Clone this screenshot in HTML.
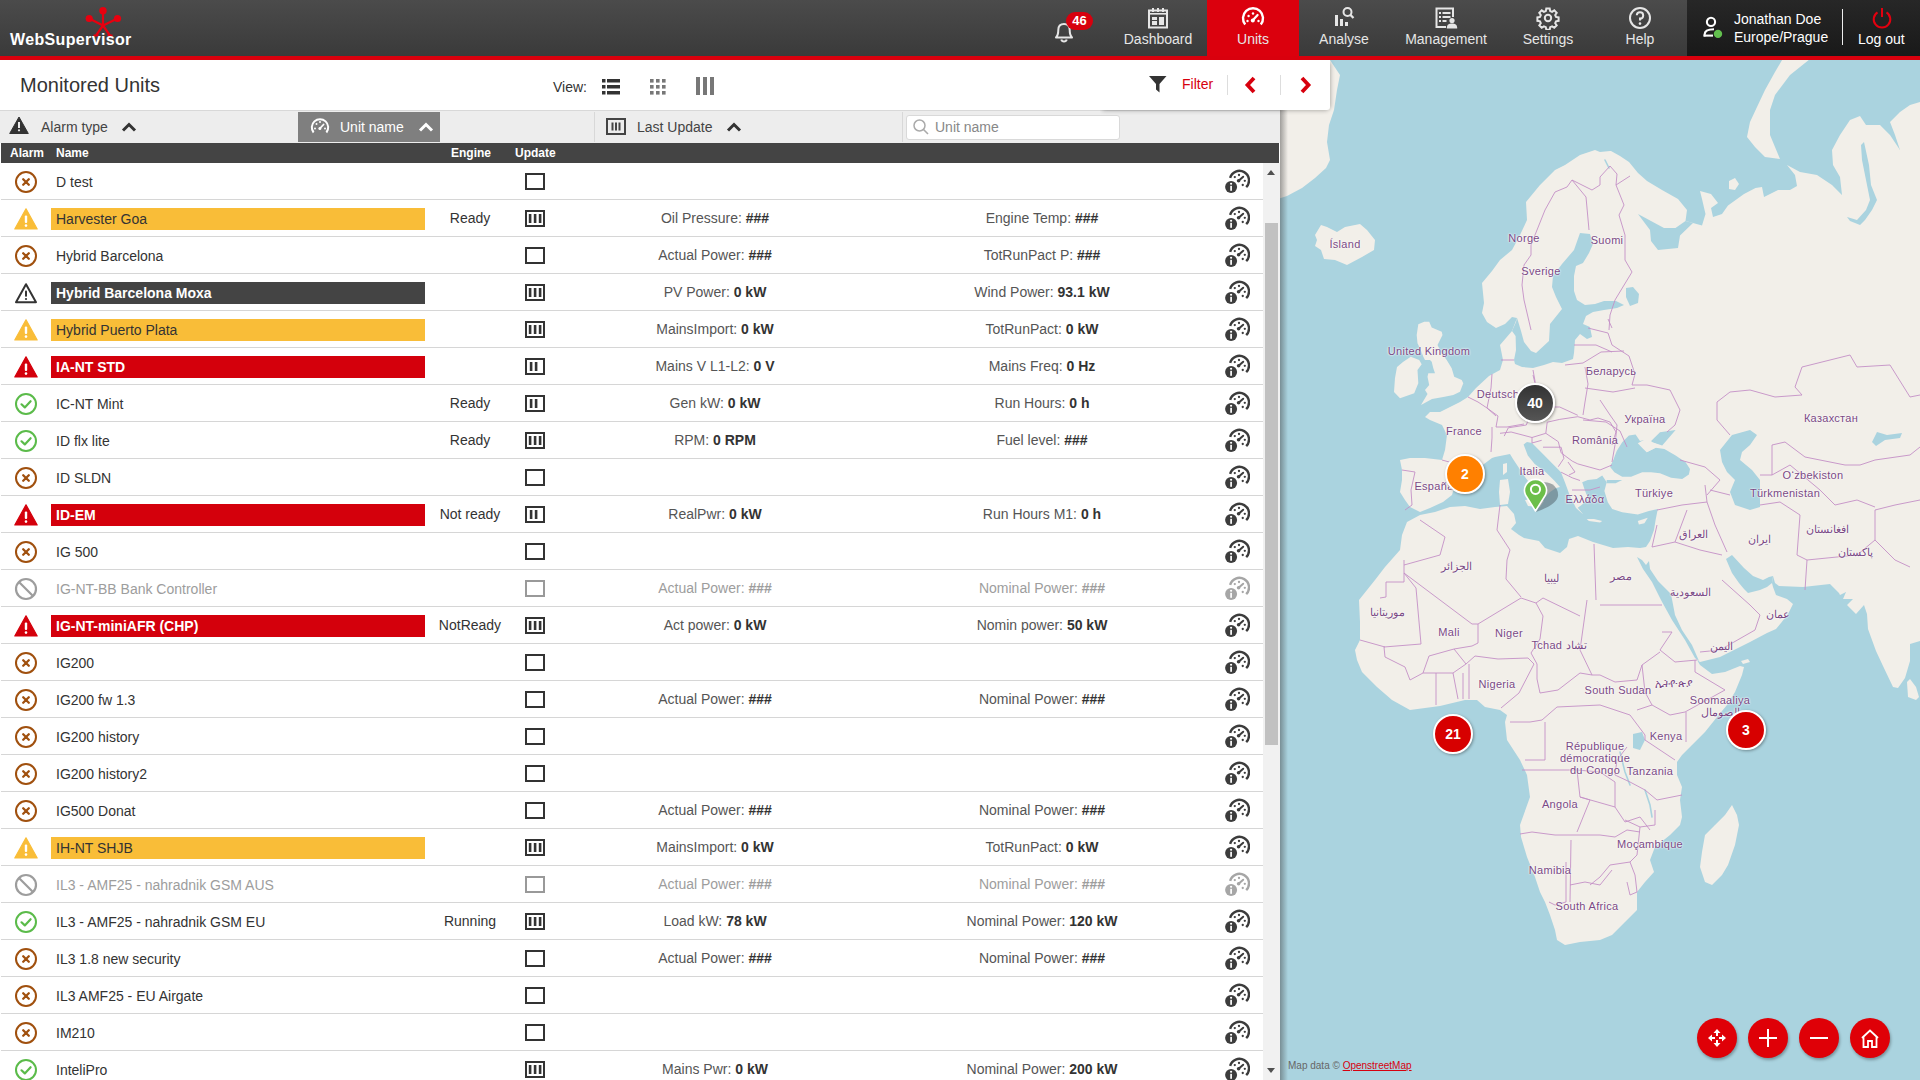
<!DOCTYPE html>
<html><head><meta charset="utf-8"><title>WebSupervisor - Units</title>
<style>*{margin:0;padding:0;box-sizing:border-box}
html,body{width:1920px;height:1080px;overflow:hidden;background:#fff;font-family:"Liberation Sans",sans-serif;color:#333}
#hdr{position:absolute;left:0;top:0;width:1920px;height:56px;background:linear-gradient(#4b4b4b,#3a3a3a)}
#redline{position:absolute;left:0;top:56px;width:1920px;height:4px;background:#d9000d}
#left{position:absolute;left:0;top:60px;width:1280px;height:1020px;background:#fff;overflow:hidden}
#left .row{position:absolute;left:1px;width:1262px;height:37px;border-bottom:1px solid #d6d6d6}
#left .row > div{position:absolute}
.al{left:13px;top:7px;width:24px;height:24px}
.nm{left:55px;top:11px;font-size:14px;white-space:nowrap;color:#333}
.nm.bar{left:50px;top:8px;width:374px;height:22px;padding:3px 0 0 5px}
.bar-y{background:#f9bd38;color:#333}
.bar-r{background:#d4000c;color:#fff;font-weight:bold}
.bar-d{background:#444;color:#fff;font-weight:bold}
.eng{left:419px;width:100px;text-align:center;top:10px;font-size:14px}
.up{left:524px;top:10px;width:20px;height:17px}
.v1,.v2{top:10px;font-size:14px;text-align:center;white-space:nowrap}
.v1{left:564px;width:300px}
.v2{left:891px;width:300px}
.lb{color:#555}
.v1 b,.v2 b{font-weight:bold;color:#333}
.inf{left:1223px;top:6px;width:26px;height:24px}
.row.gray .nm,.row.gray .lb,.row.gray b{color:#9d9d9d}
#thead{position:absolute;left:1px;top:83px;width:1278px;height:20px;background:#444}
#thead span{position:absolute;top:3px;font-size:12px;font-weight:bold;color:#fff}
#sbar{position:absolute;left:1263px;top:103px;width:17px;height:917px;background:#f1f1f1}
#sthumb{position:absolute;left:2px;top:60px;width:13px;height:522px;background:#c1c1c1}
#map{position:absolute;left:1280px;top:60px;width:640px;height:1020px;overflow:hidden;background:#aad3df}
.nav{position:absolute;top:0;width:120px;height:56px;text-align:center}
.nav .ni{position:absolute;left:48px;top:6px}
.navl{position:absolute;left:0;top:31px;width:120px;text-align:center;font-size:14px;color:#e6e6e6}
#sortbar{position:absolute;left:0;top:50px;width:1280px;height:33px;background:#ededed;border-top:1px solid #d8d8d8}
#sortbar .st{position:absolute;top:8px;font-size:14px;color:#444}
#tbox{position:absolute;left:1100px;top:60px;width:230px;height:50px;background:#fff;border-radius:0 0 3px 0;box-shadow:0 3px 4px -2px rgba(0,0,0,0.22),3px 0 4px -2px rgba(0,0,0,0.22);clip-path:inset(0 -10px -10px 0)}
.ml{position:absolute;width:120px;text-align:center;color:#7a4985;white-space:nowrap;letter-spacing:0.3px;text-shadow:0 0 2px #fff,0 0 2px #fff}
.sarr{position:absolute;left:4px;width:0;height:0;border-left:4px solid transparent;border-right:4px solid transparent}
.sarr.up{top:7px;border-bottom:5px solid #505050}
.sarr.dn{top:905px;border-top:5px solid #505050}
</style></head>
<body>
<div id="hdr"><svg style="position:absolute;left:82px;top:5px" width="44" height="32" viewBox="0 0 44 32">
<g stroke="#e8000f" stroke-width="2.2" fill="none" stroke-linecap="butt">
<path d="M21 6V20.5M7.2 13.5L21 20.5L35.5 13.5M21 20.5L14 30.5M21 20.5L28 30.5M11.5 30.5H16.5M25.5 30.5H30.5" stroke-linejoin="round"/>
</g>
<g fill="#e8000f"><circle cx="21" cy="5.7" r="3.7"/><circle cx="7.2" cy="13.5" r="3.6"/><circle cx="35.5" cy="13.5" r="3.6"/></g>
</svg>
<div style="position:absolute;left:10px;top:31px;font-size:16px;font-weight:bold;color:#fff;letter-spacing:0.35px">WebSupervisor</div><svg style="position:absolute;left:1053px;top:19px" width="22" height="24" viewBox="0 0 22 24"><path d="M3 18.5C5 16.5 5.3 14 5.3 11C5.3 7.3 7.5 5 11 5C14.5 5 16.7 7.3 16.7 11C16.7 14 17 16.5 19 18.5Z" fill="none" stroke="#e6e6e6" stroke-width="2" stroke-linejoin="round"/>
<path d="M8.3 20.5A2.8 2.8 0 0 0 13.7 20.5" fill="none" stroke="#e6e6e6" stroke-width="2"/></svg>
<div style="position:absolute;left:1066px;top:12px;width:27px;height:18px;border-radius:9px;background:#d7000e;color:#fff;font-size:13px;font-weight:bold;text-align:center;line-height:18px">46</div>
<div style="position:absolute;left:1207px;top:0;width:92px;height:56px;background:#db000d"></div>
<div class="nav" style="left:1098px"><svg class="ni" width="24" height="24" viewBox="0 0 24 24"><g fill="none" stroke="#e6e6e6" stroke-width="2"><rect x="3" y="4.5" width="18" height="17"/></g>
<g fill="#e6e6e6"><rect x="6" y="2" width="2" height="4"/><rect x="11" y="2" width="2" height="4"/><rect x="16" y="2" width="2" height="4"/>
<rect x="3" y="7" width="18" height="1.6"/><rect x="6" y="11" width="5" height="3"/><rect x="6" y="15" width="5" height="4"/><rect x="13" y="11" width="5" height="8"/></g></svg><div class="navl">Dashboard</div></div><div class="nav" style="left:1193px"><svg class="ni" width="24" height="24" viewBox="0 0 24 24"><path d="M4.2 18.5A10 10 0 1 1 19.8 18.5" fill="none" stroke="#fff" stroke-width="2.4"/>
<g fill="#fff"><circle cx="6.5" cy="15" r="1.2"/><circle cx="7.6" cy="10" r="1.2"/><circle cx="12" cy="7.5" r="1.2"/><circle cx="17.5" cy="15" r="1.2"/></g>
<path d="M11.6 14.6L16.6 9" stroke="#fff" stroke-width="2.2" stroke-linecap="round"/><circle cx="11.8" cy="14.5" r="2" fill="#fff"/></svg><div class="navl">Units</div></div><div class="nav" style="left:1284px"><svg class="ni" width="24" height="24" viewBox="0 0 24 24"><g fill="#e6e6e6"><rect x="3" y="9" width="3" height="11"/><rect x="8" y="13" width="3" height="7"/><rect x="13" y="16" width="3" height="4"/></g>
<circle cx="15.5" cy="6" r="4" fill="none" stroke="#e6e6e6" stroke-width="2"/><path d="M18.4 8.9L21.5 12" stroke="#e6e6e6" stroke-width="2.2"/></svg><div class="navl">Analyse</div></div><div class="nav" style="left:1386px"><svg class="ni" width="24" height="24" viewBox="0 0 24 24"><path d="M12 21H2.5V2.5H19V11" fill="none" stroke="#e6e6e6" stroke-width="2"/>
<g fill="#e6e6e6"><rect x="5" y="6" width="2" height="2"/><rect x="8.5" y="6" width="8" height="2"/><rect x="5" y="10" width="2" height="2"/><rect x="8.5" y="10" width="8" height="2"/><rect x="5" y="14" width="2" height="2"/><rect x="8.5" y="14" width="4" height="2"/>
<circle cx="18" cy="14.5" r="2.6"/><path d="M12.8 22.5C12.8 18.5 15 17.6 18 17.6C21 17.6 23.2 18.5 23.2 22.5Z"/></g></svg><div class="navl">Management</div></div><div class="nav" style="left:1488px"><svg class="ni" width="24" height="24" viewBox="0 0 24 24"><g fill="none" stroke="#e6e6e6" stroke-width="2">
<path d="M10.3 2.5h3.4l.5 2.6 1.9.8 2.2-1.5 2.4 2.4-1.5 2.2.8 1.9 2.6.5v3.4l-2.6.5-.8 1.9 1.5 2.2-2.4 2.4-2.2-1.5-1.9.8-.5 2.6h-3.4l-.5-2.6-1.9-.8-2.2 1.5-2.4-2.4 1.5-2.2-.8-1.9-2.6-.5v-3.4l2.6-.5.8-1.9-1.5-2.2 2.4-2.4 2.2 1.5 1.9-.8z"/>
<circle cx="12" cy="12" r="3.2"/></g></svg><div class="navl">Settings</div></div><div class="nav" style="left:1580px"><svg class="ni" width="24" height="24" viewBox="0 0 24 24"><circle cx="12" cy="12" r="10" fill="none" stroke="#e6e6e6" stroke-width="2"/>
<path d="M8.8 9.3A3.2 3.2 0 1 1 12 12.6V14.6" fill="none" stroke="#e6e6e6" stroke-width="2"/><circle cx="12" cy="17.6" r="1.3" fill="#e6e6e6"/></svg><div class="navl">Help</div></div>
<div style="position:absolute;left:1687px;top:0;width:233px;height:56px;background:linear-gradient(#272727,#191919)"></div>
<svg style="position:absolute;left:1700px;top:16px" width="24" height="24" viewBox="0 0 24 24"><circle cx="11" cy="5.9" r="4.1" fill="none" stroke="#fff" stroke-width="2.1"/><path d="M4.6 20.5V18.6C4.6 15 7.5 13.3 14 13.3" fill="none" stroke="#fff" stroke-width="2.1"/><path d="M3.6 19.6H13" stroke="#fff" stroke-width="2.1"/><circle cx="18" cy="17.9" r="4.2" fill="#62c04e"/></svg>
<div style="position:absolute;left:1734px;top:10px;font-size:14px;color:#fff;line-height:18px">Jonathan Doe<br>Europe/Prague</div>
<div style="position:absolute;left:1842px;top:9px;width:1px;height:36px;background:#eee"></div>
<svg style="position:absolute;left:1870px;top:6px" width="24" height="24" viewBox="0 0 24 24"><path d="M7.5 6.3A8.3 8.3 0 1 0 16.5 6.3" fill="none" stroke="#e3000f" stroke-width="2"/><path d="M12 2V11" stroke="#e3000f" stroke-width="2"/></svg>
<div style="position:absolute;left:1858px;top:31px;font-size:14px;color:#fff">Log out</div>
</div><div id="redline"></div>
<div id="left">

<div style="position:absolute;left:20px;top:14px;font-size:20px;color:#333">Monitored Units</div>
<div style="position:absolute;left:553px;top:19px;font-size:14px;color:#333">View:</div>
<div style="position:absolute;left:601px;top:18px"><svg width="20" height="18" viewBox="0 0 20 18"><g fill="#333"><rect x="1" y="1" width="3.5" height="3.5"/><rect x="6" y="1" width="13" height="3.5"/><rect x="1" y="7" width="3.5" height="3.5"/><rect x="6" y="7" width="13" height="3.5"/><rect x="1" y="13" width="3.5" height="3.5"/><rect x="6" y="13" width="13" height="3.5"/></g></svg></div>
<div style="position:absolute;left:649px;top:18px"><svg width="18" height="18" viewBox="0 0 18 18"><g fill="#777"><rect x="1" y="1" width="3.6" height="3.6"/><rect x="1" y="7" width="3.6" height="3.6"/><rect x="1" y="13" width="3.6" height="3.6"/><rect x="7" y="1" width="3.6" height="3.6"/><rect x="7" y="7" width="3.6" height="3.6"/><rect x="7" y="13" width="3.6" height="3.6"/><rect x="13" y="1" width="3.6" height="3.6"/><rect x="13" y="7" width="3.6" height="3.6"/><rect x="13" y="13" width="3.6" height="3.6"/></g></svg></div>
<div style="position:absolute;left:695px;top:16px"><svg width="20" height="20" viewBox="0 0 20 20"><g fill="#777"><rect x="1" y="1" width="4" height="18"/><rect x="8" y="1" width="4" height="18"/><rect x="15" y="1" width="4" height="18"/></g></svg></div>
<div id="sortbar">
 <div style="position:absolute;left:9px;top:5px"><svg width="20" height="18" viewBox="0 0 20 18"><path d="M10 1L19.3 17.5H0.7Z" fill="#333" stroke="#333" stroke-width="1" stroke-linejoin="round"/><rect x="9" y="6" width="2" height="6" fill="#eee"/><circle cx="10" cy="14.3" r="1.1" fill="#eee"/></svg></div>
 <div class="st" style="left:41px">Alarm type</div>
 <div style="position:absolute;left:121px;top:7px"><svg width="16" height="10" viewBox="0 0 16 10"><path d="M2 8.5L8 2.5L14 8.5" fill="none" stroke="#333" stroke-width="3" stroke-linejoin="miter"/></svg></div>
 <div style="position:absolute;left:298px;top:1px;width:142px;height:30px;background:#7f7f7f"></div>
 <div style="position:absolute;left:310px;top:6px"><svg width="20" height="18" viewBox="0 0 20 18"><path d="M3.6 15.5A8.2 8.2 0 1 1 16.4 15.5" fill="none" stroke="#fff" stroke-width="2"/><g fill="#fff"><circle cx="5" cy="11.5" r="1"/><circle cx="6.5" cy="7" r="1"/><circle cx="10" cy="5" r="1"/><circle cx="15" cy="11.5" r="1"/></g><path d="M9.8 11.5L13.6 7.5" stroke="#fff" stroke-width="1.8" stroke-linecap="round"/><circle cx="9.9" cy="11.4" r="1.5" fill="#fff"/></svg></div>
 <div class="st" style="left:340px;color:#fff">Unit name</div>
 <div style="position:absolute;left:418px;top:7px"><svg width="16" height="10" viewBox="0 0 16 10"><path d="M2 8.5L8 2.5L14 8.5" fill="none" stroke="#fff" stroke-width="3" stroke-linejoin="miter"/></svg></div>
 <div style="position:absolute;left:594px;top:1px;width:1px;height:30px;background:#d8d8d8"></div>
 <div style="position:absolute;left:606px;top:7px"><svg width="20" height="17" viewBox="0 0 20 17"><rect x="1" y="1" width="18" height="15" fill="none" stroke="#444" stroke-width="2"/><rect x="5.5" y="4.5" width="2" height="8" fill="#444"/><rect x="9" y="4.5" width="2" height="8" fill="#444"/><rect x="12.5" y="4.5" width="2" height="8" fill="#444"/></svg></div>
 <div class="st" style="left:637px">Last Update</div>
 <div style="position:absolute;left:726px;top:7px"><svg width="16" height="10" viewBox="0 0 16 10"><path d="M2 8.5L8 2.5L14 8.5" fill="none" stroke="#333" stroke-width="3" stroke-linejoin="miter"/></svg></div>
 <div style="position:absolute;left:902px;top:1px;width:1px;height:30px;background:#d8d8d8"></div>
 <div style="position:absolute;left:906px;top:4px;width:214px;height:25px;background:#fff;border:1px solid #d9d9d9;border-radius:3px"></div>
 <div style="position:absolute;left:912px;top:7px"><svg width="18" height="18" viewBox="0 0 18 18"><circle cx="7.5" cy="7.5" r="5.5" fill="none" stroke="#aaa" stroke-width="1.5"/><path d="M11.5 11.5L16 16" stroke="#aaa" stroke-width="1.6"/></svg></div>
 <div style="position:absolute;left:935px;top:8px;font-size:14px;color:#888">Unit name</div>
</div>

<div id="thead"><span style="left:9px">Alarm</span><span style="left:55px">Name</span><span style="left:450px">Engine</span><span style="left:514px">Update</span></div>
<div class="row" style="top:103px"><div class="al"><svg width="24" height="24" viewBox="0 0 24 24"><circle cx="12" cy="12" r="10" fill="none" stroke="#a0500e" stroke-width="2"/><path d="M9.2 9.2L14.8 14.8M14.8 9.2L9.2 14.8" stroke="#a0500e" stroke-width="2.3" stroke-linecap="round"/></svg></div><div class="nm">D test</div><div class="eng"></div><div class="up"><svg width="20" height="17" viewBox="0 0 20 17"><rect x="1" y="1" width="18" height="15" fill="none" stroke="#333" stroke-width="2"/></svg></div><div class="v1"></div><div class="v2"></div><div class="inf"><svg width="26" height="26" viewBox="0 0 26 26"><path d="M6.13 8.9A9.6 9.6 0 1 1 22.19 18.19" fill="none" stroke="#3c3c3c" stroke-width="2.4"/><circle cx="10.8" cy="8.1" r="1.15" fill="#3c3c3c"/><circle cx="15" cy="6" r="1.15" fill="#3c3c3c"/><circle cx="20.8" cy="11.8" r="1.15" fill="#3c3c3c"/><circle cx="18.75" cy="16" r="1.15" fill="#3c3c3c"/><path d="M14.6 11.8L19.2 7.7" stroke="#3c3c3c" stroke-width="2" stroke-linecap="round"/><circle cx="14.6" cy="11.8" r="1.8" fill="#3c3c3c"/><circle cx="7.1" cy="18.1" r="6.6" fill="#fff"/><circle cx="7.1" cy="18.1" r="6" fill="#3c3c3c"/><rect x="6.25" y="16.8" width="1.7" height="5" fill="#fff"/><circle cx="7.1" cy="14.75" r="1.1" fill="#fff"/></svg></div></div><div class="row" style="top:140px"><div class="al"><svg width="24" height="24" viewBox="0 0 24 24"><path d="M12 1.8L23.2 22H0.8Z" fill="#f9bd38" stroke="#f9bd38" stroke-width="1.2" stroke-linejoin="round"/><rect x="10.8" y="8.6" width="2.4" height="7.4" rx="1" fill="#fff"/><circle cx="12" cy="18.6" r="1.3" fill="#fff"/></svg></div><div class="nm bar bar-y">Harvester Goa</div><div class="eng">Ready</div><div class="up"><svg width="20" height="17" viewBox="0 0 20 17"><rect x="1" y="1" width="18" height="15" fill="none" stroke="#333" stroke-width="2"/><rect x="3.8" y="4" width="2.6" height="9" fill="#333"/><rect x="8.8" y="4" width="2.6" height="9" fill="#333"/><rect x="13.8" y="4" width="2.6" height="9" fill="#333"/></svg></div><div class="v1"><span class="lb">Oil Pressure:</span> <b>###</b></div><div class="v2"><span class="lb">Engine Temp:</span> <b>###</b></div><div class="inf"><svg width="26" height="26" viewBox="0 0 26 26"><path d="M6.13 8.9A9.6 9.6 0 1 1 22.19 18.19" fill="none" stroke="#3c3c3c" stroke-width="2.4"/><circle cx="10.8" cy="8.1" r="1.15" fill="#3c3c3c"/><circle cx="15" cy="6" r="1.15" fill="#3c3c3c"/><circle cx="20.8" cy="11.8" r="1.15" fill="#3c3c3c"/><circle cx="18.75" cy="16" r="1.15" fill="#3c3c3c"/><path d="M14.6 11.8L19.2 7.7" stroke="#3c3c3c" stroke-width="2" stroke-linecap="round"/><circle cx="14.6" cy="11.8" r="1.8" fill="#3c3c3c"/><circle cx="7.1" cy="18.1" r="6.6" fill="#fff"/><circle cx="7.1" cy="18.1" r="6" fill="#3c3c3c"/><rect x="6.25" y="16.8" width="1.7" height="5" fill="#fff"/><circle cx="7.1" cy="14.75" r="1.1" fill="#fff"/></svg></div></div><div class="row" style="top:177px"><div class="al"><svg width="24" height="24" viewBox="0 0 24 24"><circle cx="12" cy="12" r="10" fill="none" stroke="#a0500e" stroke-width="2"/><path d="M9.2 9.2L14.8 14.8M14.8 9.2L9.2 14.8" stroke="#a0500e" stroke-width="2.3" stroke-linecap="round"/></svg></div><div class="nm">Hybrid Barcelona</div><div class="eng"></div><div class="up"><svg width="20" height="17" viewBox="0 0 20 17"><rect x="1" y="1" width="18" height="15" fill="none" stroke="#333" stroke-width="2"/></svg></div><div class="v1"><span class="lb">Actual Power:</span> <b>###</b></div><div class="v2"><span class="lb">TotRunPact P:</span> <b>###</b></div><div class="inf"><svg width="26" height="26" viewBox="0 0 26 26"><path d="M6.13 8.9A9.6 9.6 0 1 1 22.19 18.19" fill="none" stroke="#3c3c3c" stroke-width="2.4"/><circle cx="10.8" cy="8.1" r="1.15" fill="#3c3c3c"/><circle cx="15" cy="6" r="1.15" fill="#3c3c3c"/><circle cx="20.8" cy="11.8" r="1.15" fill="#3c3c3c"/><circle cx="18.75" cy="16" r="1.15" fill="#3c3c3c"/><path d="M14.6 11.8L19.2 7.7" stroke="#3c3c3c" stroke-width="2" stroke-linecap="round"/><circle cx="14.6" cy="11.8" r="1.8" fill="#3c3c3c"/><circle cx="7.1" cy="18.1" r="6.6" fill="#fff"/><circle cx="7.1" cy="18.1" r="6" fill="#3c3c3c"/><rect x="6.25" y="16.8" width="1.7" height="5" fill="#fff"/><circle cx="7.1" cy="14.75" r="1.1" fill="#fff"/></svg></div></div><div class="row" style="top:214px"><div class="al"><svg width="24" height="24" viewBox="0 0 24 24"><path d="M12 3.2L22 21.2H2Z" fill="none" stroke="#333" stroke-width="2" stroke-linejoin="round"/><rect x="11" y="9.4" width="2" height="6.4" rx="0.8" fill="#333"/><circle cx="12" cy="18" r="1.1" fill="#333"/></svg></div><div class="nm bar bar-d">Hybrid Barcelona Moxa</div><div class="eng"></div><div class="up"><svg width="20" height="17" viewBox="0 0 20 17"><rect x="1" y="1" width="18" height="15" fill="none" stroke="#333" stroke-width="2"/><rect x="3.8" y="4" width="2.6" height="9" fill="#333"/><rect x="8.8" y="4" width="2.6" height="9" fill="#333"/><rect x="13.8" y="4" width="2.6" height="9" fill="#333"/></svg></div><div class="v1"><span class="lb">PV Power:</span> <b>0 kW</b></div><div class="v2"><span class="lb">Wind Power:</span> <b>93.1 kW</b></div><div class="inf"><svg width="26" height="26" viewBox="0 0 26 26"><path d="M6.13 8.9A9.6 9.6 0 1 1 22.19 18.19" fill="none" stroke="#3c3c3c" stroke-width="2.4"/><circle cx="10.8" cy="8.1" r="1.15" fill="#3c3c3c"/><circle cx="15" cy="6" r="1.15" fill="#3c3c3c"/><circle cx="20.8" cy="11.8" r="1.15" fill="#3c3c3c"/><circle cx="18.75" cy="16" r="1.15" fill="#3c3c3c"/><path d="M14.6 11.8L19.2 7.7" stroke="#3c3c3c" stroke-width="2" stroke-linecap="round"/><circle cx="14.6" cy="11.8" r="1.8" fill="#3c3c3c"/><circle cx="7.1" cy="18.1" r="6.6" fill="#fff"/><circle cx="7.1" cy="18.1" r="6" fill="#3c3c3c"/><rect x="6.25" y="16.8" width="1.7" height="5" fill="#fff"/><circle cx="7.1" cy="14.75" r="1.1" fill="#fff"/></svg></div></div><div class="row" style="top:251px"><div class="al"><svg width="24" height="24" viewBox="0 0 24 24"><path d="M12 1.8L23.2 22H0.8Z" fill="#f9bd38" stroke="#f9bd38" stroke-width="1.2" stroke-linejoin="round"/><rect x="10.8" y="8.6" width="2.4" height="7.4" rx="1" fill="#fff"/><circle cx="12" cy="18.6" r="1.3" fill="#fff"/></svg></div><div class="nm bar bar-y">Hybrid Puerto Plata</div><div class="eng"></div><div class="up"><svg width="20" height="17" viewBox="0 0 20 17"><rect x="1" y="1" width="18" height="15" fill="none" stroke="#333" stroke-width="2"/><rect x="3.8" y="4" width="2.6" height="9" fill="#333"/><rect x="8.8" y="4" width="2.6" height="9" fill="#333"/><rect x="13.8" y="4" width="2.6" height="9" fill="#333"/></svg></div><div class="v1"><span class="lb">MainsImport:</span> <b>0 kW</b></div><div class="v2"><span class="lb">TotRunPact:</span> <b>0 kW</b></div><div class="inf"><svg width="26" height="26" viewBox="0 0 26 26"><path d="M6.13 8.9A9.6 9.6 0 1 1 22.19 18.19" fill="none" stroke="#3c3c3c" stroke-width="2.4"/><circle cx="10.8" cy="8.1" r="1.15" fill="#3c3c3c"/><circle cx="15" cy="6" r="1.15" fill="#3c3c3c"/><circle cx="20.8" cy="11.8" r="1.15" fill="#3c3c3c"/><circle cx="18.75" cy="16" r="1.15" fill="#3c3c3c"/><path d="M14.6 11.8L19.2 7.7" stroke="#3c3c3c" stroke-width="2" stroke-linecap="round"/><circle cx="14.6" cy="11.8" r="1.8" fill="#3c3c3c"/><circle cx="7.1" cy="18.1" r="6.6" fill="#fff"/><circle cx="7.1" cy="18.1" r="6" fill="#3c3c3c"/><rect x="6.25" y="16.8" width="1.7" height="5" fill="#fff"/><circle cx="7.1" cy="14.75" r="1.1" fill="#fff"/></svg></div></div><div class="row" style="top:288px"><div class="al"><svg width="24" height="24" viewBox="0 0 24 24"><path d="M12 1.8L23.2 22H0.8Z" fill="#d4000c" stroke="#d4000c" stroke-width="1.2" stroke-linejoin="round"/><rect x="10.8" y="8.6" width="2.4" height="7.4" rx="1" fill="#fff"/><circle cx="12" cy="18.6" r="1.3" fill="#fff"/></svg></div><div class="nm bar bar-r">IA-NT STD</div><div class="eng"></div><div class="up"><svg width="20" height="17" viewBox="0 0 20 17"><rect x="1" y="1" width="18" height="15" fill="none" stroke="#333" stroke-width="2"/><rect x="4.8" y="4" width="2.6" height="9" fill="#333"/><rect x="9.8" y="4" width="2.6" height="9" fill="#333"/></svg></div><div class="v1"><span class="lb">Mains V L1-L2:</span> <b>0 V</b></div><div class="v2"><span class="lb">Mains Freq:</span> <b>0 Hz</b></div><div class="inf"><svg width="26" height="26" viewBox="0 0 26 26"><path d="M6.13 8.9A9.6 9.6 0 1 1 22.19 18.19" fill="none" stroke="#3c3c3c" stroke-width="2.4"/><circle cx="10.8" cy="8.1" r="1.15" fill="#3c3c3c"/><circle cx="15" cy="6" r="1.15" fill="#3c3c3c"/><circle cx="20.8" cy="11.8" r="1.15" fill="#3c3c3c"/><circle cx="18.75" cy="16" r="1.15" fill="#3c3c3c"/><path d="M14.6 11.8L19.2 7.7" stroke="#3c3c3c" stroke-width="2" stroke-linecap="round"/><circle cx="14.6" cy="11.8" r="1.8" fill="#3c3c3c"/><circle cx="7.1" cy="18.1" r="6.6" fill="#fff"/><circle cx="7.1" cy="18.1" r="6" fill="#3c3c3c"/><rect x="6.25" y="16.8" width="1.7" height="5" fill="#fff"/><circle cx="7.1" cy="14.75" r="1.1" fill="#fff"/></svg></div></div><div class="row" style="top:325px"><div class="al"><svg width="24" height="24" viewBox="0 0 24 24"><circle cx="12" cy="12" r="10" fill="none" stroke="#5bbb4a" stroke-width="2"/><path d="M7.5 12.3L10.8 15.4L16.6 9.2" fill="none" stroke="#5bbb4a" stroke-width="2.2" stroke-linecap="round" stroke-linejoin="round"/></svg></div><div class="nm">IC-NT Mint</div><div class="eng">Ready</div><div class="up"><svg width="20" height="17" viewBox="0 0 20 17"><rect x="1" y="1" width="18" height="15" fill="none" stroke="#333" stroke-width="2"/><rect x="4.8" y="4" width="2.6" height="9" fill="#333"/><rect x="9.8" y="4" width="2.6" height="9" fill="#333"/></svg></div><div class="v1"><span class="lb">Gen kW:</span> <b>0 kW</b></div><div class="v2"><span class="lb">Run Hours:</span> <b>0 h</b></div><div class="inf"><svg width="26" height="26" viewBox="0 0 26 26"><path d="M6.13 8.9A9.6 9.6 0 1 1 22.19 18.19" fill="none" stroke="#3c3c3c" stroke-width="2.4"/><circle cx="10.8" cy="8.1" r="1.15" fill="#3c3c3c"/><circle cx="15" cy="6" r="1.15" fill="#3c3c3c"/><circle cx="20.8" cy="11.8" r="1.15" fill="#3c3c3c"/><circle cx="18.75" cy="16" r="1.15" fill="#3c3c3c"/><path d="M14.6 11.8L19.2 7.7" stroke="#3c3c3c" stroke-width="2" stroke-linecap="round"/><circle cx="14.6" cy="11.8" r="1.8" fill="#3c3c3c"/><circle cx="7.1" cy="18.1" r="6.6" fill="#fff"/><circle cx="7.1" cy="18.1" r="6" fill="#3c3c3c"/><rect x="6.25" y="16.8" width="1.7" height="5" fill="#fff"/><circle cx="7.1" cy="14.75" r="1.1" fill="#fff"/></svg></div></div><div class="row" style="top:362px"><div class="al"><svg width="24" height="24" viewBox="0 0 24 24"><circle cx="12" cy="12" r="10" fill="none" stroke="#5bbb4a" stroke-width="2"/><path d="M7.5 12.3L10.8 15.4L16.6 9.2" fill="none" stroke="#5bbb4a" stroke-width="2.2" stroke-linecap="round" stroke-linejoin="round"/></svg></div><div class="nm">ID flx lite</div><div class="eng">Ready</div><div class="up"><svg width="20" height="17" viewBox="0 0 20 17"><rect x="1" y="1" width="18" height="15" fill="none" stroke="#333" stroke-width="2"/><rect x="3.8" y="4" width="2.6" height="9" fill="#333"/><rect x="8.8" y="4" width="2.6" height="9" fill="#333"/><rect x="13.8" y="4" width="2.6" height="9" fill="#333"/></svg></div><div class="v1"><span class="lb">RPM:</span> <b>0 RPM</b></div><div class="v2"><span class="lb">Fuel level:</span> <b>###</b></div><div class="inf"><svg width="26" height="26" viewBox="0 0 26 26"><path d="M6.13 8.9A9.6 9.6 0 1 1 22.19 18.19" fill="none" stroke="#3c3c3c" stroke-width="2.4"/><circle cx="10.8" cy="8.1" r="1.15" fill="#3c3c3c"/><circle cx="15" cy="6" r="1.15" fill="#3c3c3c"/><circle cx="20.8" cy="11.8" r="1.15" fill="#3c3c3c"/><circle cx="18.75" cy="16" r="1.15" fill="#3c3c3c"/><path d="M14.6 11.8L19.2 7.7" stroke="#3c3c3c" stroke-width="2" stroke-linecap="round"/><circle cx="14.6" cy="11.8" r="1.8" fill="#3c3c3c"/><circle cx="7.1" cy="18.1" r="6.6" fill="#fff"/><circle cx="7.1" cy="18.1" r="6" fill="#3c3c3c"/><rect x="6.25" y="16.8" width="1.7" height="5" fill="#fff"/><circle cx="7.1" cy="14.75" r="1.1" fill="#fff"/></svg></div></div><div class="row" style="top:399px"><div class="al"><svg width="24" height="24" viewBox="0 0 24 24"><circle cx="12" cy="12" r="10" fill="none" stroke="#a0500e" stroke-width="2"/><path d="M9.2 9.2L14.8 14.8M14.8 9.2L9.2 14.8" stroke="#a0500e" stroke-width="2.3" stroke-linecap="round"/></svg></div><div class="nm">ID SLDN</div><div class="eng"></div><div class="up"><svg width="20" height="17" viewBox="0 0 20 17"><rect x="1" y="1" width="18" height="15" fill="none" stroke="#333" stroke-width="2"/></svg></div><div class="v1"></div><div class="v2"></div><div class="inf"><svg width="26" height="26" viewBox="0 0 26 26"><path d="M6.13 8.9A9.6 9.6 0 1 1 22.19 18.19" fill="none" stroke="#3c3c3c" stroke-width="2.4"/><circle cx="10.8" cy="8.1" r="1.15" fill="#3c3c3c"/><circle cx="15" cy="6" r="1.15" fill="#3c3c3c"/><circle cx="20.8" cy="11.8" r="1.15" fill="#3c3c3c"/><circle cx="18.75" cy="16" r="1.15" fill="#3c3c3c"/><path d="M14.6 11.8L19.2 7.7" stroke="#3c3c3c" stroke-width="2" stroke-linecap="round"/><circle cx="14.6" cy="11.8" r="1.8" fill="#3c3c3c"/><circle cx="7.1" cy="18.1" r="6.6" fill="#fff"/><circle cx="7.1" cy="18.1" r="6" fill="#3c3c3c"/><rect x="6.25" y="16.8" width="1.7" height="5" fill="#fff"/><circle cx="7.1" cy="14.75" r="1.1" fill="#fff"/></svg></div></div><div class="row" style="top:436px"><div class="al"><svg width="24" height="24" viewBox="0 0 24 24"><path d="M12 1.8L23.2 22H0.8Z" fill="#d4000c" stroke="#d4000c" stroke-width="1.2" stroke-linejoin="round"/><rect x="10.8" y="8.6" width="2.4" height="7.4" rx="1" fill="#fff"/><circle cx="12" cy="18.6" r="1.3" fill="#fff"/></svg></div><div class="nm bar bar-r">ID-EM</div><div class="eng">Not ready</div><div class="up"><svg width="20" height="17" viewBox="0 0 20 17"><rect x="1" y="1" width="18" height="15" fill="none" stroke="#333" stroke-width="2"/><rect x="4.8" y="4" width="2.6" height="9" fill="#333"/><rect x="9.8" y="4" width="2.6" height="9" fill="#333"/></svg></div><div class="v1"><span class="lb">RealPwr:</span> <b>0 kW</b></div><div class="v2"><span class="lb">Run Hours M1:</span> <b>0 h</b></div><div class="inf"><svg width="26" height="26" viewBox="0 0 26 26"><path d="M6.13 8.9A9.6 9.6 0 1 1 22.19 18.19" fill="none" stroke="#3c3c3c" stroke-width="2.4"/><circle cx="10.8" cy="8.1" r="1.15" fill="#3c3c3c"/><circle cx="15" cy="6" r="1.15" fill="#3c3c3c"/><circle cx="20.8" cy="11.8" r="1.15" fill="#3c3c3c"/><circle cx="18.75" cy="16" r="1.15" fill="#3c3c3c"/><path d="M14.6 11.8L19.2 7.7" stroke="#3c3c3c" stroke-width="2" stroke-linecap="round"/><circle cx="14.6" cy="11.8" r="1.8" fill="#3c3c3c"/><circle cx="7.1" cy="18.1" r="6.6" fill="#fff"/><circle cx="7.1" cy="18.1" r="6" fill="#3c3c3c"/><rect x="6.25" y="16.8" width="1.7" height="5" fill="#fff"/><circle cx="7.1" cy="14.75" r="1.1" fill="#fff"/></svg></div></div><div class="row" style="top:473px"><div class="al"><svg width="24" height="24" viewBox="0 0 24 24"><circle cx="12" cy="12" r="10" fill="none" stroke="#a0500e" stroke-width="2"/><path d="M9.2 9.2L14.8 14.8M14.8 9.2L9.2 14.8" stroke="#a0500e" stroke-width="2.3" stroke-linecap="round"/></svg></div><div class="nm">IG 500</div><div class="eng"></div><div class="up"><svg width="20" height="17" viewBox="0 0 20 17"><rect x="1" y="1" width="18" height="15" fill="none" stroke="#333" stroke-width="2"/></svg></div><div class="v1"></div><div class="v2"></div><div class="inf"><svg width="26" height="26" viewBox="0 0 26 26"><path d="M6.13 8.9A9.6 9.6 0 1 1 22.19 18.19" fill="none" stroke="#3c3c3c" stroke-width="2.4"/><circle cx="10.8" cy="8.1" r="1.15" fill="#3c3c3c"/><circle cx="15" cy="6" r="1.15" fill="#3c3c3c"/><circle cx="20.8" cy="11.8" r="1.15" fill="#3c3c3c"/><circle cx="18.75" cy="16" r="1.15" fill="#3c3c3c"/><path d="M14.6 11.8L19.2 7.7" stroke="#3c3c3c" stroke-width="2" stroke-linecap="round"/><circle cx="14.6" cy="11.8" r="1.8" fill="#3c3c3c"/><circle cx="7.1" cy="18.1" r="6.6" fill="#fff"/><circle cx="7.1" cy="18.1" r="6" fill="#3c3c3c"/><rect x="6.25" y="16.8" width="1.7" height="5" fill="#fff"/><circle cx="7.1" cy="14.75" r="1.1" fill="#fff"/></svg></div></div><div class="row gray" style="top:510px"><div class="al"><svg width="24" height="24" viewBox="0 0 24 24"><circle cx="12" cy="12" r="10" fill="none" stroke="#9d9d9d" stroke-width="2.2"/><path d="M5 5L19 19" stroke="#9d9d9d" stroke-width="2.2"/></svg></div><div class="nm">IG-NT-BB Bank Controller</div><div class="eng"></div><div class="up"><svg width="20" height="17" viewBox="0 0 20 17"><rect x="1" y="1" width="18" height="15" fill="none" stroke="#999" stroke-width="2"/></svg></div><div class="v1"><span class="lb">Actual Power:</span> <b>###</b></div><div class="v2"><span class="lb">Nominal Power:</span> <b>###</b></div><div class="inf"><svg width="26" height="26" viewBox="0 0 26 26"><path d="M6.13 8.9A9.6 9.6 0 1 1 22.19 18.19" fill="none" stroke="#a6a6a6" stroke-width="2.4"/><circle cx="10.8" cy="8.1" r="1.15" fill="#a6a6a6"/><circle cx="15" cy="6" r="1.15" fill="#a6a6a6"/><circle cx="20.8" cy="11.8" r="1.15" fill="#a6a6a6"/><circle cx="18.75" cy="16" r="1.15" fill="#a6a6a6"/><path d="M14.6 11.8L19.2 7.7" stroke="#a6a6a6" stroke-width="2" stroke-linecap="round"/><circle cx="14.6" cy="11.8" r="1.8" fill="#a6a6a6"/><circle cx="7.1" cy="18.1" r="6.6" fill="#fff"/><circle cx="7.1" cy="18.1" r="6" fill="#a6a6a6"/><rect x="6.25" y="16.8" width="1.7" height="5" fill="#fff"/><circle cx="7.1" cy="14.75" r="1.1" fill="#fff"/></svg></div></div><div class="row" style="top:547px"><div class="al"><svg width="24" height="24" viewBox="0 0 24 24"><path d="M12 1.8L23.2 22H0.8Z" fill="#d4000c" stroke="#d4000c" stroke-width="1.2" stroke-linejoin="round"/><rect x="10.8" y="8.6" width="2.4" height="7.4" rx="1" fill="#fff"/><circle cx="12" cy="18.6" r="1.3" fill="#fff"/></svg></div><div class="nm bar bar-r">IG-NT-miniAFR (CHP)</div><div class="eng">NotReady</div><div class="up"><svg width="20" height="17" viewBox="0 0 20 17"><rect x="1" y="1" width="18" height="15" fill="none" stroke="#333" stroke-width="2"/><rect x="3.8" y="4" width="2.6" height="9" fill="#333"/><rect x="8.8" y="4" width="2.6" height="9" fill="#333"/><rect x="13.8" y="4" width="2.6" height="9" fill="#333"/></svg></div><div class="v1"><span class="lb">Act power:</span> <b>0 kW</b></div><div class="v2"><span class="lb">Nomin power:</span> <b>50 kW</b></div><div class="inf"><svg width="26" height="26" viewBox="0 0 26 26"><path d="M6.13 8.9A9.6 9.6 0 1 1 22.19 18.19" fill="none" stroke="#3c3c3c" stroke-width="2.4"/><circle cx="10.8" cy="8.1" r="1.15" fill="#3c3c3c"/><circle cx="15" cy="6" r="1.15" fill="#3c3c3c"/><circle cx="20.8" cy="11.8" r="1.15" fill="#3c3c3c"/><circle cx="18.75" cy="16" r="1.15" fill="#3c3c3c"/><path d="M14.6 11.8L19.2 7.7" stroke="#3c3c3c" stroke-width="2" stroke-linecap="round"/><circle cx="14.6" cy="11.8" r="1.8" fill="#3c3c3c"/><circle cx="7.1" cy="18.1" r="6.6" fill="#fff"/><circle cx="7.1" cy="18.1" r="6" fill="#3c3c3c"/><rect x="6.25" y="16.8" width="1.7" height="5" fill="#fff"/><circle cx="7.1" cy="14.75" r="1.1" fill="#fff"/></svg></div></div><div class="row" style="top:584px"><div class="al"><svg width="24" height="24" viewBox="0 0 24 24"><circle cx="12" cy="12" r="10" fill="none" stroke="#a0500e" stroke-width="2"/><path d="M9.2 9.2L14.8 14.8M14.8 9.2L9.2 14.8" stroke="#a0500e" stroke-width="2.3" stroke-linecap="round"/></svg></div><div class="nm">IG200</div><div class="eng"></div><div class="up"><svg width="20" height="17" viewBox="0 0 20 17"><rect x="1" y="1" width="18" height="15" fill="none" stroke="#333" stroke-width="2"/></svg></div><div class="v1"></div><div class="v2"></div><div class="inf"><svg width="26" height="26" viewBox="0 0 26 26"><path d="M6.13 8.9A9.6 9.6 0 1 1 22.19 18.19" fill="none" stroke="#3c3c3c" stroke-width="2.4"/><circle cx="10.8" cy="8.1" r="1.15" fill="#3c3c3c"/><circle cx="15" cy="6" r="1.15" fill="#3c3c3c"/><circle cx="20.8" cy="11.8" r="1.15" fill="#3c3c3c"/><circle cx="18.75" cy="16" r="1.15" fill="#3c3c3c"/><path d="M14.6 11.8L19.2 7.7" stroke="#3c3c3c" stroke-width="2" stroke-linecap="round"/><circle cx="14.6" cy="11.8" r="1.8" fill="#3c3c3c"/><circle cx="7.1" cy="18.1" r="6.6" fill="#fff"/><circle cx="7.1" cy="18.1" r="6" fill="#3c3c3c"/><rect x="6.25" y="16.8" width="1.7" height="5" fill="#fff"/><circle cx="7.1" cy="14.75" r="1.1" fill="#fff"/></svg></div></div><div class="row" style="top:621px"><div class="al"><svg width="24" height="24" viewBox="0 0 24 24"><circle cx="12" cy="12" r="10" fill="none" stroke="#a0500e" stroke-width="2"/><path d="M9.2 9.2L14.8 14.8M14.8 9.2L9.2 14.8" stroke="#a0500e" stroke-width="2.3" stroke-linecap="round"/></svg></div><div class="nm">IG200 fw 1.3</div><div class="eng"></div><div class="up"><svg width="20" height="17" viewBox="0 0 20 17"><rect x="1" y="1" width="18" height="15" fill="none" stroke="#333" stroke-width="2"/></svg></div><div class="v1"><span class="lb">Actual Power:</span> <b>###</b></div><div class="v2"><span class="lb">Nominal Power:</span> <b>###</b></div><div class="inf"><svg width="26" height="26" viewBox="0 0 26 26"><path d="M6.13 8.9A9.6 9.6 0 1 1 22.19 18.19" fill="none" stroke="#3c3c3c" stroke-width="2.4"/><circle cx="10.8" cy="8.1" r="1.15" fill="#3c3c3c"/><circle cx="15" cy="6" r="1.15" fill="#3c3c3c"/><circle cx="20.8" cy="11.8" r="1.15" fill="#3c3c3c"/><circle cx="18.75" cy="16" r="1.15" fill="#3c3c3c"/><path d="M14.6 11.8L19.2 7.7" stroke="#3c3c3c" stroke-width="2" stroke-linecap="round"/><circle cx="14.6" cy="11.8" r="1.8" fill="#3c3c3c"/><circle cx="7.1" cy="18.1" r="6.6" fill="#fff"/><circle cx="7.1" cy="18.1" r="6" fill="#3c3c3c"/><rect x="6.25" y="16.8" width="1.7" height="5" fill="#fff"/><circle cx="7.1" cy="14.75" r="1.1" fill="#fff"/></svg></div></div><div class="row" style="top:658px"><div class="al"><svg width="24" height="24" viewBox="0 0 24 24"><circle cx="12" cy="12" r="10" fill="none" stroke="#a0500e" stroke-width="2"/><path d="M9.2 9.2L14.8 14.8M14.8 9.2L9.2 14.8" stroke="#a0500e" stroke-width="2.3" stroke-linecap="round"/></svg></div><div class="nm">IG200 history</div><div class="eng"></div><div class="up"><svg width="20" height="17" viewBox="0 0 20 17"><rect x="1" y="1" width="18" height="15" fill="none" stroke="#333" stroke-width="2"/></svg></div><div class="v1"></div><div class="v2"></div><div class="inf"><svg width="26" height="26" viewBox="0 0 26 26"><path d="M6.13 8.9A9.6 9.6 0 1 1 22.19 18.19" fill="none" stroke="#3c3c3c" stroke-width="2.4"/><circle cx="10.8" cy="8.1" r="1.15" fill="#3c3c3c"/><circle cx="15" cy="6" r="1.15" fill="#3c3c3c"/><circle cx="20.8" cy="11.8" r="1.15" fill="#3c3c3c"/><circle cx="18.75" cy="16" r="1.15" fill="#3c3c3c"/><path d="M14.6 11.8L19.2 7.7" stroke="#3c3c3c" stroke-width="2" stroke-linecap="round"/><circle cx="14.6" cy="11.8" r="1.8" fill="#3c3c3c"/><circle cx="7.1" cy="18.1" r="6.6" fill="#fff"/><circle cx="7.1" cy="18.1" r="6" fill="#3c3c3c"/><rect x="6.25" y="16.8" width="1.7" height="5" fill="#fff"/><circle cx="7.1" cy="14.75" r="1.1" fill="#fff"/></svg></div></div><div class="row" style="top:695px"><div class="al"><svg width="24" height="24" viewBox="0 0 24 24"><circle cx="12" cy="12" r="10" fill="none" stroke="#a0500e" stroke-width="2"/><path d="M9.2 9.2L14.8 14.8M14.8 9.2L9.2 14.8" stroke="#a0500e" stroke-width="2.3" stroke-linecap="round"/></svg></div><div class="nm">IG200 history2</div><div class="eng"></div><div class="up"><svg width="20" height="17" viewBox="0 0 20 17"><rect x="1" y="1" width="18" height="15" fill="none" stroke="#333" stroke-width="2"/></svg></div><div class="v1"></div><div class="v2"></div><div class="inf"><svg width="26" height="26" viewBox="0 0 26 26"><path d="M6.13 8.9A9.6 9.6 0 1 1 22.19 18.19" fill="none" stroke="#3c3c3c" stroke-width="2.4"/><circle cx="10.8" cy="8.1" r="1.15" fill="#3c3c3c"/><circle cx="15" cy="6" r="1.15" fill="#3c3c3c"/><circle cx="20.8" cy="11.8" r="1.15" fill="#3c3c3c"/><circle cx="18.75" cy="16" r="1.15" fill="#3c3c3c"/><path d="M14.6 11.8L19.2 7.7" stroke="#3c3c3c" stroke-width="2" stroke-linecap="round"/><circle cx="14.6" cy="11.8" r="1.8" fill="#3c3c3c"/><circle cx="7.1" cy="18.1" r="6.6" fill="#fff"/><circle cx="7.1" cy="18.1" r="6" fill="#3c3c3c"/><rect x="6.25" y="16.8" width="1.7" height="5" fill="#fff"/><circle cx="7.1" cy="14.75" r="1.1" fill="#fff"/></svg></div></div><div class="row" style="top:732px"><div class="al"><svg width="24" height="24" viewBox="0 0 24 24"><circle cx="12" cy="12" r="10" fill="none" stroke="#a0500e" stroke-width="2"/><path d="M9.2 9.2L14.8 14.8M14.8 9.2L9.2 14.8" stroke="#a0500e" stroke-width="2.3" stroke-linecap="round"/></svg></div><div class="nm">IG500 Donat</div><div class="eng"></div><div class="up"><svg width="20" height="17" viewBox="0 0 20 17"><rect x="1" y="1" width="18" height="15" fill="none" stroke="#333" stroke-width="2"/></svg></div><div class="v1"><span class="lb">Actual Power:</span> <b>###</b></div><div class="v2"><span class="lb">Nominal Power:</span> <b>###</b></div><div class="inf"><svg width="26" height="26" viewBox="0 0 26 26"><path d="M6.13 8.9A9.6 9.6 0 1 1 22.19 18.19" fill="none" stroke="#3c3c3c" stroke-width="2.4"/><circle cx="10.8" cy="8.1" r="1.15" fill="#3c3c3c"/><circle cx="15" cy="6" r="1.15" fill="#3c3c3c"/><circle cx="20.8" cy="11.8" r="1.15" fill="#3c3c3c"/><circle cx="18.75" cy="16" r="1.15" fill="#3c3c3c"/><path d="M14.6 11.8L19.2 7.7" stroke="#3c3c3c" stroke-width="2" stroke-linecap="round"/><circle cx="14.6" cy="11.8" r="1.8" fill="#3c3c3c"/><circle cx="7.1" cy="18.1" r="6.6" fill="#fff"/><circle cx="7.1" cy="18.1" r="6" fill="#3c3c3c"/><rect x="6.25" y="16.8" width="1.7" height="5" fill="#fff"/><circle cx="7.1" cy="14.75" r="1.1" fill="#fff"/></svg></div></div><div class="row" style="top:769px"><div class="al"><svg width="24" height="24" viewBox="0 0 24 24"><path d="M12 1.8L23.2 22H0.8Z" fill="#f9bd38" stroke="#f9bd38" stroke-width="1.2" stroke-linejoin="round"/><rect x="10.8" y="8.6" width="2.4" height="7.4" rx="1" fill="#fff"/><circle cx="12" cy="18.6" r="1.3" fill="#fff"/></svg></div><div class="nm bar bar-y">IH-NT SHJB</div><div class="eng"></div><div class="up"><svg width="20" height="17" viewBox="0 0 20 17"><rect x="1" y="1" width="18" height="15" fill="none" stroke="#333" stroke-width="2"/><rect x="3.8" y="4" width="2.6" height="9" fill="#333"/><rect x="8.8" y="4" width="2.6" height="9" fill="#333"/><rect x="13.8" y="4" width="2.6" height="9" fill="#333"/></svg></div><div class="v1"><span class="lb">MainsImport:</span> <b>0 kW</b></div><div class="v2"><span class="lb">TotRunPact:</span> <b>0 kW</b></div><div class="inf"><svg width="26" height="26" viewBox="0 0 26 26"><path d="M6.13 8.9A9.6 9.6 0 1 1 22.19 18.19" fill="none" stroke="#3c3c3c" stroke-width="2.4"/><circle cx="10.8" cy="8.1" r="1.15" fill="#3c3c3c"/><circle cx="15" cy="6" r="1.15" fill="#3c3c3c"/><circle cx="20.8" cy="11.8" r="1.15" fill="#3c3c3c"/><circle cx="18.75" cy="16" r="1.15" fill="#3c3c3c"/><path d="M14.6 11.8L19.2 7.7" stroke="#3c3c3c" stroke-width="2" stroke-linecap="round"/><circle cx="14.6" cy="11.8" r="1.8" fill="#3c3c3c"/><circle cx="7.1" cy="18.1" r="6.6" fill="#fff"/><circle cx="7.1" cy="18.1" r="6" fill="#3c3c3c"/><rect x="6.25" y="16.8" width="1.7" height="5" fill="#fff"/><circle cx="7.1" cy="14.75" r="1.1" fill="#fff"/></svg></div></div><div class="row gray" style="top:806px"><div class="al"><svg width="24" height="24" viewBox="0 0 24 24"><circle cx="12" cy="12" r="10" fill="none" stroke="#9d9d9d" stroke-width="2.2"/><path d="M5 5L19 19" stroke="#9d9d9d" stroke-width="2.2"/></svg></div><div class="nm">IL3 - AMF25 - nahradnik GSM AUS</div><div class="eng"></div><div class="up"><svg width="20" height="17" viewBox="0 0 20 17"><rect x="1" y="1" width="18" height="15" fill="none" stroke="#999" stroke-width="2"/></svg></div><div class="v1"><span class="lb">Actual Power:</span> <b>###</b></div><div class="v2"><span class="lb">Nominal Power:</span> <b>###</b></div><div class="inf"><svg width="26" height="26" viewBox="0 0 26 26"><path d="M6.13 8.9A9.6 9.6 0 1 1 22.19 18.19" fill="none" stroke="#a6a6a6" stroke-width="2.4"/><circle cx="10.8" cy="8.1" r="1.15" fill="#a6a6a6"/><circle cx="15" cy="6" r="1.15" fill="#a6a6a6"/><circle cx="20.8" cy="11.8" r="1.15" fill="#a6a6a6"/><circle cx="18.75" cy="16" r="1.15" fill="#a6a6a6"/><path d="M14.6 11.8L19.2 7.7" stroke="#a6a6a6" stroke-width="2" stroke-linecap="round"/><circle cx="14.6" cy="11.8" r="1.8" fill="#a6a6a6"/><circle cx="7.1" cy="18.1" r="6.6" fill="#fff"/><circle cx="7.1" cy="18.1" r="6" fill="#a6a6a6"/><rect x="6.25" y="16.8" width="1.7" height="5" fill="#fff"/><circle cx="7.1" cy="14.75" r="1.1" fill="#fff"/></svg></div></div><div class="row" style="top:843px"><div class="al"><svg width="24" height="24" viewBox="0 0 24 24"><circle cx="12" cy="12" r="10" fill="none" stroke="#5bbb4a" stroke-width="2"/><path d="M7.5 12.3L10.8 15.4L16.6 9.2" fill="none" stroke="#5bbb4a" stroke-width="2.2" stroke-linecap="round" stroke-linejoin="round"/></svg></div><div class="nm">IL3 - AMF25 - nahradnik GSM EU</div><div class="eng">Running</div><div class="up"><svg width="20" height="17" viewBox="0 0 20 17"><rect x="1" y="1" width="18" height="15" fill="none" stroke="#333" stroke-width="2"/><rect x="3.8" y="4" width="2.6" height="9" fill="#333"/><rect x="8.8" y="4" width="2.6" height="9" fill="#333"/><rect x="13.8" y="4" width="2.6" height="9" fill="#333"/></svg></div><div class="v1"><span class="lb">Load kW:</span> <b>78 kW</b></div><div class="v2"><span class="lb">Nominal Power:</span> <b>120 kW</b></div><div class="inf"><svg width="26" height="26" viewBox="0 0 26 26"><path d="M6.13 8.9A9.6 9.6 0 1 1 22.19 18.19" fill="none" stroke="#3c3c3c" stroke-width="2.4"/><circle cx="10.8" cy="8.1" r="1.15" fill="#3c3c3c"/><circle cx="15" cy="6" r="1.15" fill="#3c3c3c"/><circle cx="20.8" cy="11.8" r="1.15" fill="#3c3c3c"/><circle cx="18.75" cy="16" r="1.15" fill="#3c3c3c"/><path d="M14.6 11.8L19.2 7.7" stroke="#3c3c3c" stroke-width="2" stroke-linecap="round"/><circle cx="14.6" cy="11.8" r="1.8" fill="#3c3c3c"/><circle cx="7.1" cy="18.1" r="6.6" fill="#fff"/><circle cx="7.1" cy="18.1" r="6" fill="#3c3c3c"/><rect x="6.25" y="16.8" width="1.7" height="5" fill="#fff"/><circle cx="7.1" cy="14.75" r="1.1" fill="#fff"/></svg></div></div><div class="row" style="top:880px"><div class="al"><svg width="24" height="24" viewBox="0 0 24 24"><circle cx="12" cy="12" r="10" fill="none" stroke="#a0500e" stroke-width="2"/><path d="M9.2 9.2L14.8 14.8M14.8 9.2L9.2 14.8" stroke="#a0500e" stroke-width="2.3" stroke-linecap="round"/></svg></div><div class="nm">IL3 1.8 new security</div><div class="eng"></div><div class="up"><svg width="20" height="17" viewBox="0 0 20 17"><rect x="1" y="1" width="18" height="15" fill="none" stroke="#333" stroke-width="2"/></svg></div><div class="v1"><span class="lb">Actual Power:</span> <b>###</b></div><div class="v2"><span class="lb">Nominal Power:</span> <b>###</b></div><div class="inf"><svg width="26" height="26" viewBox="0 0 26 26"><path d="M6.13 8.9A9.6 9.6 0 1 1 22.19 18.19" fill="none" stroke="#3c3c3c" stroke-width="2.4"/><circle cx="10.8" cy="8.1" r="1.15" fill="#3c3c3c"/><circle cx="15" cy="6" r="1.15" fill="#3c3c3c"/><circle cx="20.8" cy="11.8" r="1.15" fill="#3c3c3c"/><circle cx="18.75" cy="16" r="1.15" fill="#3c3c3c"/><path d="M14.6 11.8L19.2 7.7" stroke="#3c3c3c" stroke-width="2" stroke-linecap="round"/><circle cx="14.6" cy="11.8" r="1.8" fill="#3c3c3c"/><circle cx="7.1" cy="18.1" r="6.6" fill="#fff"/><circle cx="7.1" cy="18.1" r="6" fill="#3c3c3c"/><rect x="6.25" y="16.8" width="1.7" height="5" fill="#fff"/><circle cx="7.1" cy="14.75" r="1.1" fill="#fff"/></svg></div></div><div class="row" style="top:917px"><div class="al"><svg width="24" height="24" viewBox="0 0 24 24"><circle cx="12" cy="12" r="10" fill="none" stroke="#a0500e" stroke-width="2"/><path d="M9.2 9.2L14.8 14.8M14.8 9.2L9.2 14.8" stroke="#a0500e" stroke-width="2.3" stroke-linecap="round"/></svg></div><div class="nm">IL3 AMF25 - EU Airgate</div><div class="eng"></div><div class="up"><svg width="20" height="17" viewBox="0 0 20 17"><rect x="1" y="1" width="18" height="15" fill="none" stroke="#333" stroke-width="2"/></svg></div><div class="v1"></div><div class="v2"></div><div class="inf"><svg width="26" height="26" viewBox="0 0 26 26"><path d="M6.13 8.9A9.6 9.6 0 1 1 22.19 18.19" fill="none" stroke="#3c3c3c" stroke-width="2.4"/><circle cx="10.8" cy="8.1" r="1.15" fill="#3c3c3c"/><circle cx="15" cy="6" r="1.15" fill="#3c3c3c"/><circle cx="20.8" cy="11.8" r="1.15" fill="#3c3c3c"/><circle cx="18.75" cy="16" r="1.15" fill="#3c3c3c"/><path d="M14.6 11.8L19.2 7.7" stroke="#3c3c3c" stroke-width="2" stroke-linecap="round"/><circle cx="14.6" cy="11.8" r="1.8" fill="#3c3c3c"/><circle cx="7.1" cy="18.1" r="6.6" fill="#fff"/><circle cx="7.1" cy="18.1" r="6" fill="#3c3c3c"/><rect x="6.25" y="16.8" width="1.7" height="5" fill="#fff"/><circle cx="7.1" cy="14.75" r="1.1" fill="#fff"/></svg></div></div><div class="row" style="top:954px"><div class="al"><svg width="24" height="24" viewBox="0 0 24 24"><circle cx="12" cy="12" r="10" fill="none" stroke="#a0500e" stroke-width="2"/><path d="M9.2 9.2L14.8 14.8M14.8 9.2L9.2 14.8" stroke="#a0500e" stroke-width="2.3" stroke-linecap="round"/></svg></div><div class="nm">IM210</div><div class="eng"></div><div class="up"><svg width="20" height="17" viewBox="0 0 20 17"><rect x="1" y="1" width="18" height="15" fill="none" stroke="#333" stroke-width="2"/></svg></div><div class="v1"></div><div class="v2"></div><div class="inf"><svg width="26" height="26" viewBox="0 0 26 26"><path d="M6.13 8.9A9.6 9.6 0 1 1 22.19 18.19" fill="none" stroke="#3c3c3c" stroke-width="2.4"/><circle cx="10.8" cy="8.1" r="1.15" fill="#3c3c3c"/><circle cx="15" cy="6" r="1.15" fill="#3c3c3c"/><circle cx="20.8" cy="11.8" r="1.15" fill="#3c3c3c"/><circle cx="18.75" cy="16" r="1.15" fill="#3c3c3c"/><path d="M14.6 11.8L19.2 7.7" stroke="#3c3c3c" stroke-width="2" stroke-linecap="round"/><circle cx="14.6" cy="11.8" r="1.8" fill="#3c3c3c"/><circle cx="7.1" cy="18.1" r="6.6" fill="#fff"/><circle cx="7.1" cy="18.1" r="6" fill="#3c3c3c"/><rect x="6.25" y="16.8" width="1.7" height="5" fill="#fff"/><circle cx="7.1" cy="14.75" r="1.1" fill="#fff"/></svg></div></div><div class="row" style="top:991px"><div class="al"><svg width="24" height="24" viewBox="0 0 24 24"><circle cx="12" cy="12" r="10" fill="none" stroke="#5bbb4a" stroke-width="2"/><path d="M7.5 12.3L10.8 15.4L16.6 9.2" fill="none" stroke="#5bbb4a" stroke-width="2.2" stroke-linecap="round" stroke-linejoin="round"/></svg></div><div class="nm">InteliPro</div><div class="eng"></div><div class="up"><svg width="20" height="17" viewBox="0 0 20 17"><rect x="1" y="1" width="18" height="15" fill="none" stroke="#333" stroke-width="2"/><rect x="3.8" y="4" width="2.6" height="9" fill="#333"/><rect x="8.8" y="4" width="2.6" height="9" fill="#333"/><rect x="13.8" y="4" width="2.6" height="9" fill="#333"/></svg></div><div class="v1"><span class="lb">Mains Pwr:</span> <b>0 kW</b></div><div class="v2"><span class="lb">Nominal Power:</span> <b>200 kW</b></div><div class="inf"><svg width="26" height="26" viewBox="0 0 26 26"><path d="M6.13 8.9A9.6 9.6 0 1 1 22.19 18.19" fill="none" stroke="#3c3c3c" stroke-width="2.4"/><circle cx="10.8" cy="8.1" r="1.15" fill="#3c3c3c"/><circle cx="15" cy="6" r="1.15" fill="#3c3c3c"/><circle cx="20.8" cy="11.8" r="1.15" fill="#3c3c3c"/><circle cx="18.75" cy="16" r="1.15" fill="#3c3c3c"/><path d="M14.6 11.8L19.2 7.7" stroke="#3c3c3c" stroke-width="2" stroke-linecap="round"/><circle cx="14.6" cy="11.8" r="1.8" fill="#3c3c3c"/><circle cx="7.1" cy="18.1" r="6.6" fill="#fff"/><circle cx="7.1" cy="18.1" r="6" fill="#3c3c3c"/><rect x="6.25" y="16.8" width="1.7" height="5" fill="#fff"/><circle cx="7.1" cy="14.75" r="1.1" fill="#fff"/></svg></div></div>
<div id="sbar"><div id="sthumb"></div><div class="sarr up"></div><div class="sarr dn"></div></div>
</div>
<div id="map"><svg width="640" height="1020" viewBox="0 0 640 1020" style="position:absolute;left:0;top:0"><polygon points="246,142 260,125 275,110 285,105 300,95 315,90 320,92 330,91 331,91 340,96 349,102 358,113 367,121 382,130 398,139 407,150 405.5,161 413,163 422,165.5 425.5,154 422,139 420,131 431,134 438,143 431,148 433,157 442,154 448,145.5 464,134 475.5,128 482,127 484,137 498,130 510,130 517,126 515,115 507,105 520,112 537,115 552,125 562,135 560,117 553,105 552,90 560,75 570,60 580,56 586,65 600,65 610,75 620,90 615,75 610,62 620,52 630,45 640,42 645,42 645,581 640,581 630,584 630,601 625,618 618,628 613,627 603,606 596,591 588,569 587,554 584,545 576,554 567,545 573,539 563,539 566,532 560,535 559,533 550,524 523,527 499,526 495,523 493,516 492,523 493,527 496,535 507,539 513,544 508,554 501,563 496,569 487,573 470,582 440,597 420,602 417,600 420,605 432,614 445,612 460,606 464,607 462,615 455,632 447,645 437,657 425,672 412,685 402,695 397,702 397,715 402,727 400,740 402,757 400,765 390,775 375,787 370,800 374,812 365,822 357,832 357,850 345,862 332,875 320,880 300,882 285,885 277,880 275,870 270,855 265,842 260,832 255,817 247,797 241,777 240,765 250,737 247,715 240,700 227,680 225,662 227,655 220,650 205,647 197,640 185,640 160,646 130,650 112,640 97,627 82,612 77,600 75,590 80,580 80,562 79,540 95,520 105,507 120,490 122,475 127,462 140,455 140,452 130,447 125,440 120,432 122,420 122,410 120,400 130,398 145,398 162,400 165,390 167,375 162,365 150,360 145,357 150,352 160,352 170,347 180,342 188,337 196,328 209,316 220,310 223,300 220,285 232,271 237,258 232,257 225,264 216,268 207,262 202,253 204,243 202,223 212,211 220,200 232,190 240,175 247,160" fill="#f2efe9"/><polygon points="-5,-5 52,-5 50,0 60,15 57,30 54,50 49,65 47,82 50,100 46,108 35,118 22,128 7,136 -5,140" fill="#f2efe9"/><polygon points="35,175 41,165 47,167 57,172 65,167 80,164 87,170 95,180 94,190 82,197 67,205 55,200 44,199 41,190 35,186 37,180" fill="#f2efe9"/><polygon points="138.3,264.2 144.2,261.7 149.2,261.7 151.7,267.5 161.7,271.7 162.5,275 157.5,285 161.7,293.3 166.7,300 171.7,308.3 174.2,316.7 181.7,320 183.3,323.3 180,331.7 173.3,335 163.3,337 152,339 141,345 147.5,334 145,330 149.2,325 147.5,316.7 148.3,313.3 155,313.3 153.3,308.3 151.7,301.7 150,300 145,300 143.3,296.7 140.8,290 137.5,283.3 136.7,275" fill="#f2efe9"/><polygon points="123.3,301.7 130.8,296.7 139.2,300 141.7,304.2 137.5,310 138.3,323.3 134.2,333.3 120,338.3 114,332 115,318 117,307" fill="#f2efe9"/><polygon points="505,-5 535,-5 510,15 495,35 490,50 490,75 495,87 500,99 485,97 475,87 467,77 470,62 477,47 485,30 495,12" fill="#f2efe9"/><polygon points="452,745 457,755 459,765 455,785 448,805 442,815 432,825 425,822 420,807 422,792 425,775 435,765 445,755" fill="#f2efe9"/><polygon points="627,622 630,619 636,627 639,637 636,640 628,637" fill="#f2efe9"/><polygon points="449,121 455,118 459,124 455,130 449,129" fill="#f2efe9"/><polygon points="140,452 150,448 163,442 172,435 175,425 185,415 200,407 212,398 215,397 230,394 233,399 239,408 245,417 252,426 258,433 262,438 266,436 270,432 276,428 280,427 274.2,420.5 265.8,412.2 254.7,403.9 247.8,395.5 243.6,384.4 247,382 252,383 261.7,392.8 272.8,403.9 281,412.2 285.3,423.3 289.4,434.4 292,440 296,448 303.3,454.4 297.8,447.8 302.2,444.4 307.8,437.8 304.4,428.9 302.2,422.2 307.8,420 316.7,418.9 322.2,415.6 326.7,422.2 324.4,431.1 327.8,442.2 332.2,448.9 342.2,452.2 357.8,454.4 368.9,451.1 377.8,448.9 375.6,460 374,470 370,481 366,487 360,488 348,487 333,488 313,482 298,476 289,479 287,487 280,493 265,488 259,481 244,478 239,475 231,469 236,463 234,454 227,446 215,447 200,449 185,446 170,447 155,452 140,455" fill="#aad3df"/><polygon points="326.7,420 342.2,420 335.6,423.3 326.7,423.3" fill="#aad3df"/><polygon points="342.2,382.2 348.9,375.6 355.6,374.4 360,381.1 364.4,380 371.1,382.2 366.7,392.2 375.6,387.8 384.4,388.9 395.6,395.6 405.6,402.2 410,408.9 408.9,414.4 402.2,418.9 391.1,417.8 380,413.3 371.1,412.2 362.2,412.2 351.1,416.7 342.2,416.7 334.4,412.2 330,406.7 333.3,400 336.7,391.1" fill="#aad3df"/><polygon points="371.1,381.1 380,372.2 395.6,370 388.9,377.8 382.2,385.6 372.2,382.2" fill="#aad3df"/><polygon points="440,390 452,375 470,370 477,375 470,385 462,392 460,400 472,410 480,420 480,435 480,447 470,450 455,445 450,432 455,420 447,412 442,402" fill="#aad3df"/><polygon points="592,382 597,372 607,375 622,373 620,378 605,380 596,386" fill="#aad3df"/><polygon points="357,497 363,509 372,522 381,540 392,560 405,580 415,598 419,601 412,585 402,570 395,555 391,534 378,521 370,509 369,501 366,505 362,500" fill="#aad3df"/><polygon points="452,495 464,508 473,516 483,520 489,517 493,516 492,523 487,527 480,530 468,533 464,529 459,523 452,513 446,499" fill="#aad3df"/><polygon points="300,173 310,174 313,184 309,193 303,203 296,206 294,216 294,231 297,240 305,245 315,244 324,241 336,241 344,245 337,248 324,250 313,252 306,256 303,264 310,267 312,277 307,279 300,274 295,280 294,293 293,299 282,303 273,302 264,305 253,308 242,307 235,304 234,300 236,290 235.6,276 232,271 236,262 237,258 238,261 241,271 244,282 251,291 256,293 269,281 270,264 282,249 276,237 272,227 273,216 282,204 294,190" fill="#aad3df"/><polygon points="395.5,168 384,168 371,161 358,154 370,170 371,181 378,190 398,188 400,175.5 413,163 405.5,161" fill="#aad3df"/><polygon points="584,82 589,105 591,125 595,135 597,140 592,150 585,160 580,165 570,161 567,157 577,160 586,150 590,140 586,120 582,100 581,85" fill="#aad3df"/><polygon points="346,228 353,227 359,234 358,243 350,246 346,237" fill="#aad3df"/><polygon points="353,674 362,672 365,680 360,690 353,688" fill="#aad3df"/><polygon points="220,420 228,419 230,432 228,444 220,445 219,432" fill="#f2efe9"/><polygon points="223,404 227,403 227,412 223,415" fill="#f2efe9"/><polygon points="245,440 258,438 264,441 260,447 248,446" fill="#f2efe9"/><polygon points="306.7,458.9 314,459 322.2,461.1 320,462.6 308.9,461" fill="#f2efe9"/><polygon points="357.8,461.1 367.8,457.8 364.4,463.3 358.9,464.4" fill="#f2efe9"/><polygon points="357.8,383.3 365.6,378.9 372.2,382.2 380,385.6 375.6,387.8 366.7,392.2 363.3,388.9" fill="#f2efe9"/></svg><svg width="640" height="1020" viewBox="0 0 640 1020" style="position:absolute;left:0;top:0"><g fill="none" stroke="#aad3df" stroke-width="1.6" stroke-linecap="round"><polyline points="340,692 345,712 350,725"/><polyline points="365,730 370,745 372,757"/><polyline points="325,100 329,108"/></g><polygon points="461,601 468,599 470,602 463,604" fill="#f2efe9"/></svg><svg width="640" height="1020" viewBox="0 0 640 1020" style="position:absolute;left:0;top:0"><g fill="none" stroke="#c490c6" stroke-width="0.9" stroke-linejoin="round"><polyline points="251,270 244,240 242,225 244,205 251,195 251,185 265,150 275,132 287,127 292,120"/><polyline points="292,120 306,137 309,170"/><polyline points="292,120 312,130 320,125 320,117 330,106 337,114 336,125"/><polyline points="336,125 350,116"/><polyline points="336,125 344,145 339,155 345,175 345,200 352,212 335,240 330,255 329,270"/><polyline points="188,337 198,342 207,348 216,356"/><polyline points="212,314 211,328 207,348"/><polyline points="221,300 234,300"/><polyline points="253,310 255,321 255,328 252,342"/><polyline points="285,305 303,303 321,292 344,291"/><polyline points="294,285 316,285 332,292"/><polyline points="308,268 328,273 332,285"/><polyline points="328,259 332,268"/><polyline points="305,307 308,324 305,342 303,355"/><polyline points="332,285 349,296 355,314 352,325"/><polyline points="305,328 333,332 355,328"/><polyline points="207,348 218,356 216,367 227,367 244,364"/><polyline points="303,360 326,362 340,371 347,387"/><polyline points="212,367 212,378 211,392"/><polyline points="162,400 180,405 197,407"/><polyline points="122,410 135,412 131,430 132,445 125,450"/><polyline points="140,460 165,477 160,495 124,505"/><polyline points="124,500 124,522 106,522 106,537 100,538"/><polyline points="220,445 217,470 230,490"/><polyline points="230,490 227,500 226,519 241,537"/><polyline points="124,513 136,528"/><polyline points="297.8,403.9 320,410 332,405"/><polyline points="292,430 310,430 320,427"/><polyline points="320,340 330,355 337,365 335,385 332,402"/><polyline points="352,325 367,325 390,330 400,350 395,365 387,372"/><polyline points="437,342 450,332 470,330 495,337 522,335 515,327 522,307 570,295 577,307 610,305 630,337 640,335"/><polyline points="437,342 437,360 450,375"/><polyline points="492,415 492,385 505,382 525,397 565,405 580,405 595,400 630,395 640,387"/><polyline points="480,415 492,415 510,405 540,430 555,445"/><polyline points="480,445 500,442 520,455 517,495 527,500"/><polyline points="527,500 577,495 595,480 595,450 615,445 640,440"/><polyline points="555,445 577,440 595,447"/><polyline points="527,500 525,530"/><polyline points="595,480 615,500 630,507"/><polyline points="400,400 425,407 440,420 427,435"/><polyline points="430,430 450,435"/><polyline points="377,450 402,445 427,442 425,425"/><polyline points="427,442 435,465 447,492"/><polyline points="407,450 395,482 372,487 377,465"/><polyline points="395,482 420,490 442,495"/><polyline points="442,520 470,545 480,555 475,570 440,590 420,592"/><polyline points="314,484 316,540"/><polyline points="320,545 382,545"/><polyline points="136,528 141,584 104,587 105,597"/><polyline points="80,580 105,587"/><polyline points="124,513 144,528 192,564 198,564 241,538 256,543 263,538 300,556"/><polyline points="198,564 198,583 192,586 174,589 149,596 143,613"/><polyline points="105,597 125,607 130,620 143,613 156,613 173,613 186,604"/><polyline points="156,613 156,645"/><polyline points="173,613 178,639"/><polyline points="183,613 183,639"/><polyline points="189,604 189,639"/><polyline points="174,589 186,604 195,596 218,599 248,598 254,604"/><polyline points="256,543 263,556 260,579 251,593 257,604 257,619 260,633"/><polyline points="254,604 239,633 221,648"/><polyline points="260,633 278,630 300,613 312,615"/><polyline points="307,540 300,590 312,615 320,615"/><polyline points="230,662 250,662 262,660"/><polyline points="265,662 265,700 245,700"/><polyline points="277,647 320,645 350,655"/><polyline points="262,660 277,647"/><polyline points="242,710 297,710 300,737 310,740 297,772"/><polyline points="240,774 252,772 275,775 320,775 335,777 347,770 360,772"/><polyline points="291,780 290,842"/><polyline points="286,802 286,842 275,845 269,842"/><polyline points="290,825 305,822 320,825 332,810"/><polyline points="345,760 360,767 375,765 375,750"/><polyline points="360,767 357,795 350,802 330,805 320,817 310,825"/><polyline points="350,802 355,815 357,832 350,835 347,822"/><polyline points="382,572 392,572 380,590 395,602 417,600"/><polyline points="320,615 335,622 357,620 362,605 380,592"/><polyline points="362,605 365,632 372,645 357,650"/><polyline points="415,600 415,612 445,630 405,652"/><polyline points="372,645 390,655 405,652"/><polyline points="406,652 406,682"/><polyline points="350,655 365,675 365,680"/><polyline points="365,680 395,700"/><polyline points="347,687 337,700 335,715 350,722"/><polyline points="350,722 365,730 377,740 402,735"/><polyline points="335,722 335,747 345,762 360,757 370,770"/><polyline points="297,710 320,712 335,722"/><polyline points="300,737 335,747"/><polyline points="253,315 254.7,322"/><polyline points="247.8,360.8 246.4,365 228.3,367.8 224.2,376.1"/><polyline points="268.6,347 279.7,347 297.8,355.3"/><polyline points="220,373.3 231.1,372 252,377.5 265.8,373.3"/><polyline points="265.8,373.3 267.2,362.2 279.7,359.4 297.8,356.7"/><polyline points="252,377.5 252,383 261.7,380.3"/><polyline points="265.8,373.3 278.3,381.7 281.1,392.8"/><polyline points="263,387.2 281.1,387.2 283.9,398.3 278.3,406.7"/><polyline points="281.1,392.8 292.2,401.1 297.8,403.9"/><polyline points="288,402 295,412 289,415"/><polyline points="281.1,412.2 292.2,417.8 300,420.5"/><polyline points="297.8,356.7 310,360 318,358"/><polyline points="318,358 330,362 336,372 332,385"/></g></svg><div class="ml" style="left:5px;top:178px;font-size:11px">Ísland</div><div class="ml" style="left:184px;top:172px;font-size:11px">Norge</div><div class="ml" style="left:267px;top:174px;font-size:11px">Suomi</div><div class="ml" style="left:201px;top:205px;font-size:11px">Sverige</div><div class="ml" style="left:89px;top:285px;font-size:11px">United Kingdom</div><div class="ml" style="left:158px;top:328px;font-size:11px">Deutsch</div><div class="ml" style="left:271px;top:305px;font-size:11px">Беларусь</div><div class="ml" style="left:124px;top:365px;font-size:11px">France</div><div class="ml" style="left:305px;top:353px;font-size:11px">Україна</div><div class="ml" style="left:491px;top:352px;font-size:11px">Казахстан</div><div class="ml" style="left:255px;top:374px;font-size:11px">România</div><div class="ml" style="left:192px;top:405px;font-size:11px">Italia</div><div class="ml" style="left:94px;top:420px;font-size:11px">España</div><div class="ml" style="left:245px;top:433px;font-size:11px">Ελλάδα</div><div class="ml" style="left:473px;top:409px;font-size:11px">O‘zbekiston</div><div class="ml" style="left:314px;top:427px;font-size:11px">Türkiye</div><div class="ml" style="left:445px;top:427px;font-size:11px">Türkmenistan</div><div class="ml" style="left:353px;top:468px;font-size:11px">العراق</div><div class="ml" style="left:419px;top:473px;font-size:11px">ایران</div><div class="ml" style="left:487px;top:463px;font-size:11px">افغانستان</div><div class="ml" style="left:515px;top:486px;font-size:11px">پاکستان</div><div class="ml" style="left:116px;top:500px;font-size:11px">الجزائر</div><div class="ml" style="left:211px;top:512px;font-size:11px">ليبيا</div><div class="ml" style="left:281px;top:510px;font-size:11px">مصر</div><div class="ml" style="left:350px;top:526px;font-size:11px">السعودية</div><div class="ml" style="left:47px;top:546px;font-size:11px">موريتانيا</div><div class="ml" style="left:438px;top:548px;font-size:11px">عمان</div><div class="ml" style="left:109px;top:566px;font-size:11px">Mali</div><div class="ml" style="left:169px;top:567px;font-size:11px">Niger</div><div class="ml" style="left:219px;top:579px;font-size:11px">Tchad تشاد</div><div class="ml" style="left:381px;top:580px;font-size:11px">اليمن</div><div class="ml" style="left:334px;top:617px;font-size:11px">ኢትዮጵያ</div><div class="ml" style="left:157px;top:618px;font-size:11px">Nigeria</div><div class="ml" style="left:278px;top:624px;font-size:11px">South Sudan</div><div class="ml" style="left:380px;top:634px;font-size:11px">Soomaaliya</div><div class="ml" style="left:380px;top:646px;font-size:11px">الصومال</div><div class="ml" style="left:255px;top:680px;font-size:11px">République</div><div class="ml" style="left:255px;top:692px;font-size:11px">démocratique</div><div class="ml" style="left:255px;top:704px;font-size:11px">du Congo</div><div class="ml" style="left:326px;top:670px;font-size:11px">Kenya</div><div class="ml" style="left:310px;top:705px;font-size:11px">Tanzania</div><div class="ml" style="left:220px;top:738px;font-size:11px">Angola</div><div class="ml" style="left:310px;top:778px;font-size:11px">Moçambique</div><div class="ml" style="left:210px;top:804px;font-size:11px">Namibia</div><div class="ml" style="left:247px;top:840px;font-size:11px">South Africa</div><div style="position:absolute;left:235px;top:323px;width:40px;height:40px;border-radius:50%;background:linear-gradient(#333,#555);border:2px solid #fff;box-shadow:1px 1px 3px rgba(0,0,0,0.35);color:#fff;font-weight:bold;font-size:14px;text-align:center;line-height:36px">40</div><div style="position:absolute;left:165px;top:394px;width:40px;height:40px;border-radius:50%;background:#ff8000;border:2px solid #fff;box-shadow:1px 1px 3px rgba(0,0,0,0.35);color:#fff;font-weight:bold;font-size:14px;text-align:center;line-height:36px">2</div><div style="position:absolute;left:153px;top:654px;width:40px;height:40px;border-radius:50%;background:#d70000;border:2px solid #fff;box-shadow:1px 1px 3px rgba(0,0,0,0.35);color:#fff;font-weight:bold;font-size:14px;text-align:center;line-height:36px">21</div><div style="position:absolute;left:446px;top:650px;width:40px;height:40px;border-radius:50%;background:#d70000;border:2px solid #fff;box-shadow:1px 1px 3px rgba(0,0,0,0.35);color:#fff;font-weight:bold;font-size:14px;text-align:center;line-height:36px">3</div><svg style="position:absolute;left:240px;top:415px" width="50" height="40" viewBox="0 0 50 40">
<path d="M20 8C30 5 39 12 38 21C37 27 30 32 16 37Z" fill="#4e5d66" opacity="0.5"/>
<path d="M15.5 36L5.5 20A11 11 0 1 1 25.5 20Z" fill="#6cbf4a" stroke="#fff" stroke-width="1.6" stroke-linejoin="round"/>
<circle cx="15.5" cy="14.3" r="4.6" fill="none" stroke="#fff" stroke-width="2"/></svg><div style="position:absolute;left:417px;top:958px;width:40px;height:40px;border-radius:50%;background:#df0007;box-shadow:1px 2px 3px rgba(0,0,0,0.3)"></div><div style="position:absolute;left:468px;top:958px;width:40px;height:40px;border-radius:50%;background:#df0007;box-shadow:1px 2px 3px rgba(0,0,0,0.3)"></div><div style="position:absolute;left:519px;top:958px;width:40px;height:40px;border-radius:50%;background:#df0007;box-shadow:1px 2px 3px rgba(0,0,0,0.3)"></div><div style="position:absolute;left:570px;top:958px;width:40px;height:40px;border-radius:50%;background:#df0007;box-shadow:1px 2px 3px rgba(0,0,0,0.3)"></div><svg style="position:absolute;left:417px;top:958px" width="200" height="40" viewBox="0 0 200 40">
<g fill="#fff"><path d="M20 11L23.5 15H21V18H19V15H16.5Z"/><path d="M20 29L16.5 25H19V22H21V25H23.5Z"/><path d="M11 20L15 16.5V19H18V21H15V23.5Z"/><path d="M29 20L25 23.5V21H22V19H25V16.5Z"/></g>
<path d="M62 20H80M71 11V29" stroke="#fff" stroke-width="2"/>
<path d="M113 20H131" stroke="#fff" stroke-width="2"/>
<path d="M165 20L173 12.5L181 20M166.5 19V29H171V23H175V29H179.5V19" fill="none" stroke="#fff" stroke-width="1.8"/>
</svg><div style="position:absolute;left:8px;top:1000px;font-size:10px;color:#666;font-family:'Liberation Sans',sans-serif">Map data © <span style="color:#d7000e;text-decoration:underline">OpenstreetMap</span></div><div style="position:absolute;left:0;top:0;width:8px;height:1020px;background:linear-gradient(90deg,rgba(60,60,60,0.45),rgba(60,60,60,0))"></div></div>
<div id="tbox"></div>
<div style="position:absolute;left:1148px;top:74px"><svg width="20" height="20" viewBox="0 0 20 20"><path d="M1 2H18.5L11.5 10V18.5L8 15.5V10Z" fill="#333"/></svg></div>
<div style="position:absolute;left:1182px;top:76px;font-size:14px;color:#d7000e">Filter</div>
<div style="position:absolute;left:1227px;top:75px;width:1px;height:20px;background:#ddd"></div>
<div style="position:absolute;left:1244px;top:76px"><svg width="14" height="18" viewBox="0 0 14 18"><path d="M10 2L3.5 9L10 16" fill="none" stroke="#d7000e" stroke-width="3.8" stroke-linejoin="miter"/></svg></div>
<div style="position:absolute;left:1280px;top:75px;width:1px;height:20px;background:#ddd"></div>
<div style="position:absolute;left:1298px;top:76px"><svg width="14" height="18" viewBox="0 0 14 18"><path d="M4 2L10.5 9L4 16" fill="none" stroke="#d7000e" stroke-width="3.8" stroke-linejoin="miter"/></svg></div>

</body></html>
